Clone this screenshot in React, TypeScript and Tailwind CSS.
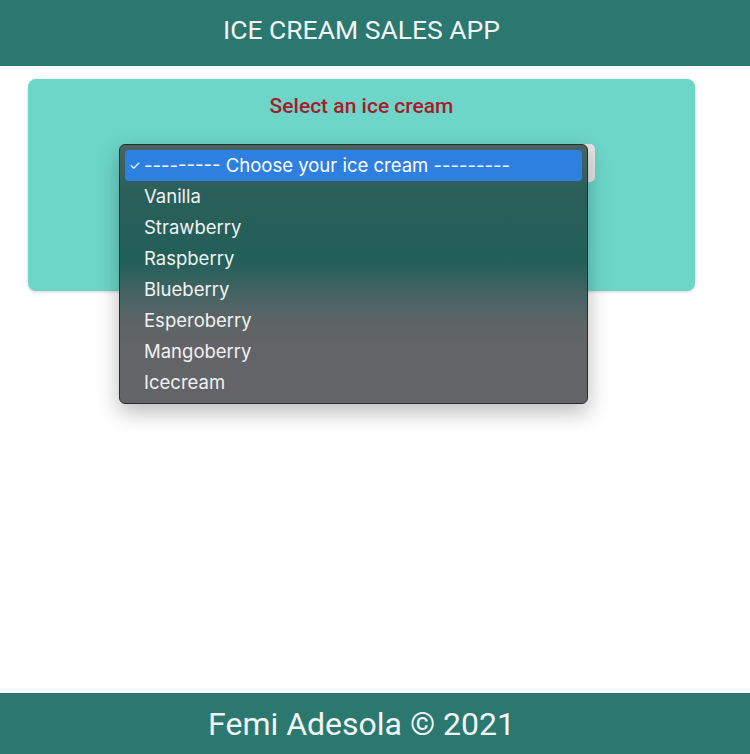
const FLAVOURS = [
  "Vanilla",
  "Strawberry",
  "Raspberry",
  "Blueberry",
  "Esperoberry",
  "Mangoberry",
  "Icecream",
];

export default function App() {
  return (
    <div className="min-h-screen flex flex-col bg-white font-['Roboto',sans-serif]">
      {/* Header */}
      <header className="h-[66px] bg-[#2a786f] flex items-center justify-center pr-[27px] pb-[6px]">
        <h1 className="text-[26.5px] text-[#f4f4f4] leading-none">ICE CREAM SALES APP</h1>
      </header>

      <main className="flex-1 pt-[13px]">
        <div className="relative ml-[28px] w-[667px] h-[212px] rounded-[8px] bg-[#6dd6c9] shadow-[0_1px_3px_rgba(0,0,0,0.18)]">
          <h2 className="pt-[13px] text-center text-[21px] text-[#a81b2c] font-medium leading-[28px]">
            Select an ice cream
          </h2>

          {/* select box behind the open menu */}
          <div className="mt-[24px] ml-[99px] w-[468px] h-[38px] rounded-[5px] bg-[#e6e6e6]" />

          {/* open dropdown menu */}
          <div
            className="absolute left-[91px] top-[65px] w-[469px] h-[260px] rounded-[6px] border border-[#2b2b2b] shadow-[0_8px_22px_rgba(0,0,0,0.28)] px-[5px] pt-[5px] font-['Inter',sans-serif] text-[18.5px] leading-none text-[#f2f2f2]"
            style={{
              background:
                "linear-gradient(to bottom, #4a6461 0%, #2a5f5a 18%, #225f59 45%, #4b6464 60%, #5f6466 70%, #636468 80%, #636468 100%)",
            }}
          >
            <div className="h-[31px] rounded-[4px] bg-[#2d7fe0] flex items-center text-white pb-[1px]">
              <span className="w-[19px] pl-[4px] text-[13px]">✓</span>
              <span>--------- Choose your ice cream ---------</span>
            </div>
            {FLAVOURS.map((f) => (
              <div key={f} className="h-[31px] flex items-center pl-[19px] pb-[1px]">
                {f}
              </div>
            ))}
          </div>
        </div>
      </main>

      {/* Footer */}
      <footer className="h-[61px] bg-[#2a786f] flex items-center justify-center pr-[27px]">
        <p className="text-[32px] text-[#f4f4f4] leading-none">Femi Adesola © 2021</p>
      </footer>
    </div>
  );
}
